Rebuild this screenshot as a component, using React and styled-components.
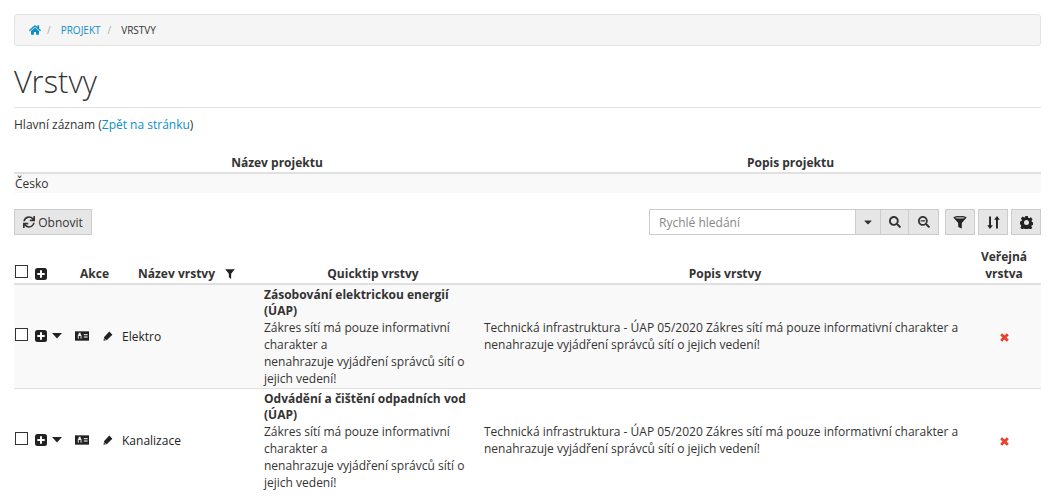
import React from "react";
import styled, { createGlobalStyle } from "styled-components";
import { FaHome, FaSync, FaCaretDown, FaSearch, FaSearchMinus } from "react-icons/fa";

const Global = createGlobalStyle`
  html, body { margin: 0; padding: 0; background: #fff; }
  body { font-family: "Open Sans", sans-serif; font-size: 12px; line-height: 17px; color: #333; overflow: hidden; height: 500px; }
`;
const Page = styled.div`padding: 14px 17px 0 14px;`;
const Crumbs = styled.nav`
  display: flex; align-items: center; height: 30px; padding: 0 14px; background: #f5f5f5;
  border: 1px solid #e3e3e3; border-radius: 3px; font-size: 10px; text-transform: uppercase; color: #333;
  svg { color: #0e8fc7; font-size: 12px; }
`;
const Sep = styled.span`color: #aaa; margin: 0 ${p => p.$r}px 0 ${p => p.$l}px;`;
const CrumbLink = styled.a`color: #0e8fc7;`;
const Title = styled.h1`
  margin: 17px 0 0; padding-bottom: 5px; height: 39px; border-bottom: 1px solid #e0e0e0;
  font-family: "Open Sans Light", "Open Sans", sans-serif; font-weight: 300; font-size: 31px; line-height: 37px; color: #333;
`;
const Lead = styled.p`margin: 8px 0 0; line-height: 17px;`;
const Link = styled.a`color: #0e8fc7;`;
const Table = styled.table`width: 100%; border-collapse: collapse; table-layout: fixed;`;
const MasterTable = styled(Table)`margin-top: 19px;`;
const Th = styled.th`
  padding: 2px 2px 1px; width: ${p => p.$w || "auto"}; font-weight: 700; text-align: center; vertical-align: bottom;
  border-bottom: 2px solid #e0e0e0; line-height: 17px;
`;
const MasterCell = styled.td`padding: 1px; height: 17px; background: #f9f9f9; line-height: 17px;`;
const Toolbar = styled.div`display: flex; align-items: center; justify-content: space-between; margin-top: 16px;`;
const Btn = styled.button`
  display: inline-flex; align-items: center; justify-content: center; gap: 3px; height: 26px; box-sizing: border-box; padding: 0; width: ${p => p.$w}px;
  background: #e6e6e6; border: 1px solid #ccc; color: #333; font: 12px "Open Sans", sans-serif; border-radius: 0;
  svg { font-size: ${p => p.$icon || 12}px; }
`;
const Right = styled.div`display: flex; align-items: center;`;
const Search = styled.input`
  box-sizing: border-box; width: 206px; height: 26px; border: 1px solid #ccc; border-right: 0; padding: 0 9px; font: 12px "Open Sans", sans-serif; outline: 0;
  &::placeholder { color: #888; opacity: 1; }
`;
const Joined = styled(Btn)`& + & { border-left: 0; }`;
const Gap = styled(Btn)`margin-left: ${p => p.$ml || 3}px;`;
const Grid = styled(Table)`margin-top: 13px;`;
const GridTh = styled.th`
  padding: 0 1px 1px; font-weight: 700; text-align: ${p => p.$left ? "left" : "center"}; vertical-align: bottom;
  border-bottom: 2px solid #e0e0e0; line-height: 17px;
`;
const Td = styled.td`
  padding: 0 1px 1px; vertical-align: middle; line-height: 17px; text-align: ${p => p.$c ? "center" : "left"};
  background: ${p => p.$odd ? "#f9f9f9" : "#fff"};
  border-bottom: ${p => p.$last ? "0" : "1px solid #e0e0e0"};
`;
const TipTitle = styled.strong`display: block; padding-top: 2px; line-height: 16px;`;
const Box = styled.span`
  display: block; flex: none; width: 11px; height: 11px; border: 1px solid #333; background: #fff; margin-bottom: 4px;
`;
const Tools = styled.div`display: flex; align-items: center; color: #222;`;
const HeadRow = styled.div`display: flex; align-items: center;`;
const Name = styled.span`margin-left: 9px;`;
const AkceLabel = styled.span`margin-left: 33px;`;
const Icon = styled.svg`display: block; flex: none; margin-left: ${p => p.$ml || 0}px;`;
const FunnelWrap = styled.span`display: inline-block; margin-left: 10px; vertical-align: -1px;`;

const Plus = ({ ml }) => (
  <Icon $ml={ml} width="12" height="12" viewBox="0 0 12 12">
    <rect width="12" height="12" rx="2.5" fill="#222" />
    <path d="M5 2.3h2V5h2.7v2H7v2.7H5V7H2.3V5H5z" fill="#fff" />
  </Icon>
);
const Caret = ({ ml }) => (
  <Icon $ml={ml} width="10" height="6" viewBox="0 0 10 6"><path d="M0 0h10L5 5.5z" fill="#222" /></Icon>
);
const VCard = ({ ml }) => (
  <Icon $ml={ml} width="14" height="10" viewBox="0 0 15 10">
    <rect width="15" height="10" fill="#222" />
    <path d="M3 8V4.6C3 3.7 3.6 3 4 3V1.6h2V3c.4 0 1 .7 1 1.6V8H6V5H4v3z" fill="#eee" />
    <rect x="9.5" y="3" width="4" height="1.2" fill="#eee" /><rect x="9.5" y="5.5" width="4" height="1.2" fill="#eee" />
  </Icon>
);
const Pencil = ({ ml }) => (
  <Icon $ml={ml} width="10" height="10" viewBox="0 0 10 10">
    <path d="M6.3.6 9.4 3.7 4 9 .5 9.7 1.2 6z" fill="#222" />
    <path d="M1.1 7.4 2.8 9.1" stroke="#fff" strokeWidth=".7" />
  </Icon>
);
const Cross = () => (
  <svg width="9" height="9" viewBox="0 0 9 9" style={{ verticalAlign: "middle" }}>
    <path d="M1.2 1.2 7.8 7.8M7.8 1.2 1.2 7.8" stroke="#e8432a" strokeWidth="2.8" />
  </svg>
);
const Funnel = ({ size = 10 }) => (
  <svg width={size} height={size} viewBox="0 0 13 13" style={{ display: "block" }}>
    <path d="M.3.3h12.4L8 6.2V13L5 10.6V6.2z" fill="#222" />
  </svg>
);
const ToolFunnel = () => (
  <svg width="14" height="13" viewBox="0 0 14 13">
    <path d="M.4 1.6C.4.6 3 0 7 0s6.600.6 6.600 1.600L8.800 7v5.600L5.200 11V7z" fill="#222" />
    <ellipse cx="7" cy="1.800" rx="4.600" ry="1" fill="#999" />
  </svg>
);
const Sort = () => (
  <svg width="13" height="13" viewBox="0 0 13 13" fill="#222">
    <path d="M2.100.5h1.900v8.700h1.900L3 13 .2 9.200h1.900zM9 12.500V3.800H7.100L10 0l2.800 3.800h-1.900v8.700z" />
  </svg>
);
const Cog = () => (
  <svg width="13" height="13" viewBox="0 0 13 13">
    <path fillRule="evenodd" fill="#222" d="M5.200 0h2.600l.4 1.800 1.100.5 1.600-1 1.700 2-1.100 1.500.4 1.100 1.500.4v2.600l-1.700.4-.4 1 1 1.500-1.900 1.800-1.500-1-1.100.5-.4 1.400H5.200l-.4-1.600-1.100-.4-1.500 1-1.900-1.800 1-1.500-.4-1L0 8V5.400l1.500-.4.400-1.100-1-1.500 1.800-1.900 1.600 1 1-.5zM6.500 4a2.500 2.500 0 1 0 0 5 2.500 2.500 0 0 0 0-5z" />
  </svg>
);

const quick = "Zákres sítí má pouze informativní charakter a";
const rows = [
  { name: "Elektro", q: "Zásobování elektrickou energií (ÚAP)", odd: true },
  { name: "Kanalizace", q: "Odvádění a čištění odpadních vod (ÚAP)", odd: false, last: true },
];

export default function App() {
  return (
    <Page>
      <Global />
      <Crumbs>
        <FaHome /><Sep $l={6} $r={10}>/</Sep><CrumbLink>Projekt</CrumbLink><Sep $l={7} $r={10}>/</Sep><span>Vrstvy</span>
      </Crumbs>
      <Title>Vrstvy</Title>
      <Lead>Hlavní záznam (<Link>Zpět na stránku</Link>)</Lead>
      <MasterTable>
        <thead><tr><Th $w="522px">Název projektu</Th><Th>Popis projektu</Th></tr></thead>
        <tbody><tr><MasterCell>Česko</MasterCell><MasterCell /></tr></tbody>
      </MasterTable>
      <Toolbar>
        <Btn $w={78}><FaSync />Obnovit</Btn>
        <Right>
          <Search placeholder="Rychlé hledání" />
          <Joined $w={26} $icon={12}><FaCaretDown /></Joined>
          <Joined $w={28} $icon={12}><FaSearch /></Joined>
          <Joined $w={30} $icon={12}><FaSearchMinus /></Joined>
          <Gap $w={30} $ml={6}><ToolFunnel /></Gap>
          <Gap $w={30}><Sort /></Gap>
          <Gap $w={30}><Cog /></Gap>
        </Right>
      </Toolbar>
      <Grid>
        <colgroup>
          <col style={{ width: 123 }} /><col style={{ width: 126 }} /><col style={{ width: 220 }} /><col style={{ width: 484 }} /><col style={{ width: 74 }} />
        </colgroup>
        <thead>
          <tr>
            <GridTh $left>
              <HeadRow><Box /><Plus ml={7} /><AkceLabel>Akce</AkceLabel></HeadRow>
            </GridTh>
            <GridTh $left>Název vrstvy<FunnelWrap><Funnel /></FunnelWrap></GridTh>
            <GridTh>Quicktip vrstvy</GridTh>
            <GridTh>Popis vrstvy</GridTh>
            <GridTh>Veřejná<br />vrstva</GridTh>
          </tr>
        </thead>
        <tbody>
          {rows.map((r) => (
            <tr key={r.name}>
              <Td $odd={r.odd} $last={r.last} colSpan={2}>
                <Tools>
                  <Box /><Plus ml={7} /><Caret ml={5} /><VCard ml={13} /><Pencil ml={14} /><Name>{r.name}</Name>
                </Tools>
              </Td>
              <Td $odd={r.odd} $last={r.last}>
                <TipTitle>{r.q}</TipTitle>{quick}<br />nenahrazuje vyjádření správců sítí o jejich vedení!
              </Td>
              <Td $odd={r.odd} $last={r.last}>Technická infrastruktura - ÚAP 05/2020 Zákres sítí má pouze informativní charakter a nenahrazuje vyjádření správců sítí o jejich vedení!</Td>
              <Td $odd={r.odd} $last={r.last} $c><Cross /></Td>
            </tr>
          ))}
        </tbody>
      </Grid>
    </Page>
  );
}
